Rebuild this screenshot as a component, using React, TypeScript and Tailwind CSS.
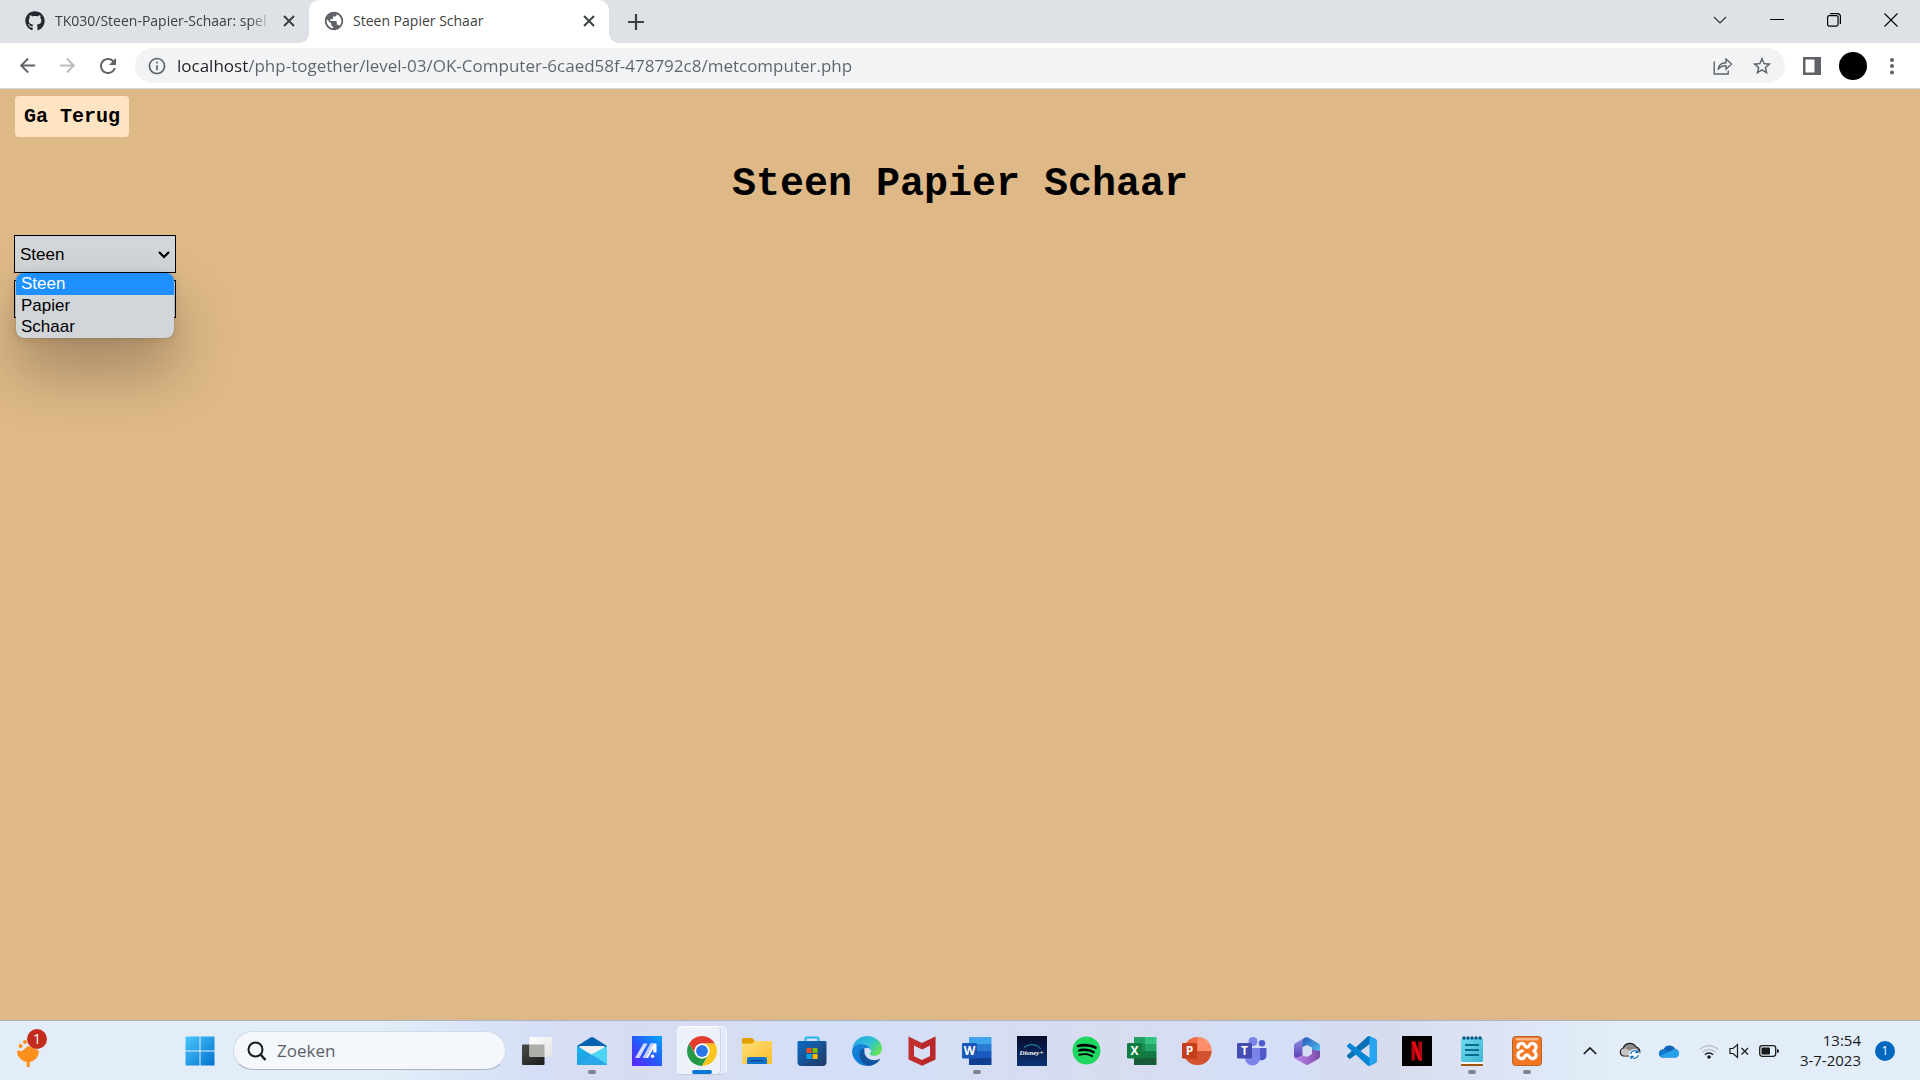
import React from "react";
import { FaGithub, FaSpotify } from "react-icons/fa";
import { MdArrowBack, MdArrowForward, MdRefresh, MdStarBorder, MdInfoOutline, MdPublic } from "react-icons/md";

function CloseGlyph() {
  return (
    <svg viewBox="0 0 12 12" className="size-3" fill="none" stroke="#3c4043" strokeWidth="2" aria-hidden="true">
      <path d="M1 1 11 11M11 1 1 11" />
    </svg>
  );
}

function Tab({ title, active, children }: { title: string; active?: boolean; children: React.ReactNode }) {
  return (
    <div
      role="tab"
      aria-selected={!!active}
      className={
        active
          ? "relative flex h-full w-[300px] items-center gap-2 rounded-t-[10px] bg-white pr-3 pb-0.5 pl-3.5"
          : "flex h-full w-[309px] items-center gap-2.5 pr-3 pb-0.5 pl-[25px]"
      }
    >
      {children}
      <span
        className={
          active
            ? "flex-1 overflow-hidden text-sm whitespace-nowrap text-[#3c4043]"
            : "flex-1 overflow-hidden mask-r-from-90% text-sm whitespace-nowrap text-[#3c4043]"
        }
      >
        {title}
      </span>
      <button type="button" aria-label={"Sluiten: " + title} className="flex size-4 items-center justify-center">
        <CloseGlyph />
      </button>
      {active && (
        <>
          <span className="absolute bottom-0 -left-2.5 size-2.5 bg-[radial-gradient(circle_at_0_0,transparent_10px,#fff_10px)]" />
          <span className="absolute -right-2.5 bottom-0 size-2.5 bg-[radial-gradient(circle_at_100%_0,transparent_10px,#fff_10px)]" />
        </>
      )}
    </div>
  );
}

function TabStrip() {
  return (
    <div className="flex h-[43px] items-center bg-[#dee1e6]">
      <div role="tablist" className="flex h-full">
        <Tab title="TK030/Steen-Papier-Schaar: spel">
          <FaGithub className="size-5 shrink-0 text-[#24292f]" />
        </Tab>
        <Tab title="Steen Papier Schaar" active>
          <MdPublic className="size-[22px] shrink-0 text-[#5f6368]" />
        </Tab>
      </div>
      <button type="button" aria-label="Nieuw tabblad" className="ml-[13px] flex size-7 items-center justify-center">
        <svg viewBox="0 0 16 16" className="size-4" stroke="#3c4043" strokeWidth="2.2" aria-hidden="true">
          <path d="M8 0v16M0 8h16" />
        </svg>
      </button>
      <div className="mr-px mb-1 ml-auto flex h-[38px]">
        <button type="button" aria-label="Tabbladen zoeken" className="flex w-[57px] items-center justify-center">
          <svg viewBox="0 0 14 14" className="size-3.5" fill="none" stroke="#333" strokeWidth="1.2" aria-hidden="true">
            <path d="M1 4l6 6 6-6" />
          </svg>
        </button>
        <button type="button" aria-label="Minimaliseren" className="flex w-[57px] items-center justify-center">
          <svg viewBox="0 0 14 14" className="size-3.5" stroke="#000" aria-hidden="true">
            <path d="M0 6.5h14" />
          </svg>
        </button>
        <button type="button" aria-label="Verkleinen" className="flex w-[57px] items-center justify-center">
          <svg viewBox="0 0 14 14" className="size-3.5" fill="none" stroke="#000" strokeWidth="1.2" aria-hidden="true">
            <rect x=".6" y="2.6" width="10.5" height="10.5" rx="1.8" />
            <path d="M3 .6h7.5a2.9 2.9 0 0 1 2.900 2.900V11" />
          </svg>
        </button>
        <button type="button" aria-label="Sluiten" className="flex w-[57px] items-center justify-center">
          <svg viewBox="0 0 14 14" className="size-3.5" fill="none" stroke="#000" strokeWidth="1.1" aria-hidden="true">
            <path d="M.5.5l13 13M13.5.5l-13 13" />
          </svg>
        </button>
      </div>
    </div>
  );
}

function Toolbar() {
  return (
    <div className="flex h-[46px] items-center border-b border-[#d5d8dc] bg-white pr-6 pl-4">
      <div className="flex items-center gap-[17px]">
        <button type="button" aria-label="Vorige">
          <MdArrowBack className="size-[23px] text-[#5f6368]" />
        </button>
        <button type="button" aria-label="Volgende">
          <MdArrowForward className="size-[23px] text-[#babcbe]" />
        </button>
        <button type="button" aria-label="Vernieuwen">
          <MdRefresh className="size-6 text-[#5f6368]" />
        </button>
      </div>
      <div className="ml-[15px] flex h-[35px] flex-1 items-center rounded-full bg-[#f1f3f4] pr-3 pl-3">
        <MdInfoOutline className="size-5 text-[#5f6368]" />
        <input
          aria-label="Adresbalk"
          defaultValue="localhost/php-together/level-03/OK-Computer-6caed58f-478792c8/metcomputer.php"
          className="ml-2.5 min-w-0 flex-1 bg-[linear-gradient(90deg,#202124_71px,#5f6368_71px)] bg-clip-text text-[17px] text-transparent caret-black outline-none"
        />
        <button type="button" aria-label="Delen" className="mr-[18px]">
          <svg viewBox="0 0 20 20" className="size-5" fill="none" stroke="#5f6368" strokeWidth="1.4" aria-hidden="true">
            <path d="M1.2 5.5V18h14v-3.5" />
            <path d="M5 13.5c.6-4.5 3.500-6.700 8-6.800V3l5.500 5-5.500 5.200V9.700c-3.600 0-6 .9-8 3.800Z" />
          </svg>
        </button>
        <button type="button" aria-label="Bladwijzer toevoegen">
          <MdStarBorder className="size-[22px] text-[#5f6368]" />
        </button>
      </div>
      <button type="button" aria-label="Zijvenster" className="ml-[18px]">
        <svg viewBox="0 0 18 18" className="size-[18px]" aria-hidden="true">
          <path fill="#5f6368" fillRule="evenodd" d="M0 0h18v18H0ZM2.5 2.500v13H11.500v-13Z" />
        </svg>
      </button>
      <button type="button" aria-label="Profiel" className="ml-[18px] size-7 rounded-full bg-black" />
      <button type="button" aria-label="Menu" className="ml-[21px]">
        <svg viewBox="0 0 8 18" className="h-[18px] w-2" fill="#5f6368" aria-hidden="true">
          <circle cx="4" cy="3" r="2" />
          <circle cx="4" cy="9" r="2" />
          <circle cx="4" cy="15.5" r="2" />
        </svg>
      </button>
    </div>
  );
}

const choices = ["Steen", "Papier", "Schaar"];

function GamePage() {
  return (
    <main className="flex-1 bg-[#deb887] px-3.5 pt-[7px]">
      <a
        href="#terug"
        className="ml-px inline-flex h-[41px] items-center rounded-[4px] bg-[#ffe4c4] px-[9px] font-['Courier_New','Liberation_Mono',monospace] text-xl font-bold text-black"
      >
        Ga Terug
      </a>
      <h1 className="mt-5 text-center font-['Courier_New','Liberation_Mono',monospace] text-[40px] leading-[56px] font-bold text-black">
        Steen Papier Schaar
      </h1>
      <form className="mt-[22px] flex w-[162px] flex-col gap-[7px] font-['Liberation_Sans',sans-serif] text-[17px] text-black">
        <div className="relative">
          <select
            aria-label="Keuze"
            defaultValue="Steen"
            className="block h-[38px] w-full appearance-none border border-black bg-[#d3d6d9] px-[5px] pt-0.5"
          >
            {choices.map((c) => (
              <option key={c}>{c}</option>
            ))}
          </select>
          <svg viewBox="0 0 12 8" className="absolute top-4 right-1.5 h-2 w-3" fill="none" stroke="#000" strokeWidth="2.2" aria-hidden="true">
            <path d="M1 1l5 5 5-5" />
          </svg>
          <ul
            role="listbox"
            aria-label="Opties"
            className="absolute top-full right-0.5 left-0.5 z-10 overflow-hidden rounded-lg bg-[#d3d6d9] pb-px leading-[21px] shadow-[0_0_1px_rgba(0,0,0,0.5),0_2px_12px_rgba(0,0,0,0.12),0_32px_60px_rgba(0,0,0,0.28)]"
          >
            {choices.map((c, i) => (
              <li
                key={c}
                role="option"
                aria-selected={i === 0}
                className={i === 0 ? "h-[22px] bg-[#1e90ff] px-[5px] text-white" : "h-[21px] px-[5px]"}
              >
                {c}
              </li>
            ))}
          </ul>
        </div>
        <button type="submit" aria-label="Versturen" className="h-[38px] w-full border border-black bg-[#d3d6d9]" />
      </form>
    </main>
  );
}

function WindowsIcon() {
  return (
    <svg viewBox="0 0 30 30" className="size-[30px]" aria-hidden="true">
      <defs>
        <linearGradient id="win" x1="0" y1="0" x2="1" y2="1" gradientUnits="objectBoundingBox">
          <stop offset="0" stopColor="#4cc9fb" />
          <stop offset="1" stopColor="#0070d0" />
        </linearGradient>
        <mask id="winMask">
          <path fill="#fff" d="M.5.5h14v14H.5ZM15.5.5h14v14h-14ZM.5 15.500h14v14H.5ZM15.500 15.500h14v14h-14Z" />
        </mask>
      </defs>
      <rect width="30" height="30" rx="1.5" fill="url(#win)" mask="url(#winMask)" />
    </svg>
  );
}

function TaskViewIcon() {
  return (
    <svg viewBox="0 0 30 30" className="size-[30px]" aria-hidden="true">
      <defs>
        <linearGradient id="tvd" x1="0" y1="0" x2="1" y2="1">
          <stop offset="0" stopColor="#4a4a4a" />
          <stop offset="1" stopColor="#1a1a1a" />
        </linearGradient>
        <linearGradient id="tvl" x1="0" y1="0" x2="1" y2="1">
          <stop offset="0" stopColor="#fff" />
          <stop offset="1" stopColor="#e2e2e4" />
        </linearGradient>
      </defs>
      <rect x="0" y="8.5" width="22.5" height="20.5" rx="1" fill="url(#tvd)" />
      <rect x="7.5" y="1" width="22.5" height="20" rx="1" fill="url(#tvl)" />
      <path d="M7.5 8.500h14a1 1 0 0 1 1 1V21h-14a1 1 0 0 1-1-1Z" fill="#adadaa" />
    </svg>
  );
}

function MailIcon() {
  return (
    <svg viewBox="0 0 30 30" className="size-[30px]" aria-hidden="true">
      <defs>
        <linearGradient id="ml" x1="0" y1="0" x2="1" y2="1">
          <stop offset="0" stopColor="#1db4ee" />
          <stop offset="1" stopColor="#1c92dc" />
        </linearGradient>
      </defs>
      <path d="M0 10 13.5 1.500a3 3 0 0 1 3 0L30 10l-4 5H4Z" fill="#0560ad" />
      <path d="M2.5 10h25v8L15 24 2.500 18Z" fill="#f1f1f1" />
      <path d="M0 10l15 9L30 28a1 1 0 0 1-1 1H1a1 1 0 0 1-1-1Z" fill="url(#ml)" />
      <path d="M30 10v18.500L14.500 18.500Z" fill="#4bd5f4" />
      <path d="M0 28.500 14.500 18.500 30 28.500l-1 .5H1Z" fill="#2aa7e8" />
    </svg>
  );
}

function MyAsusIcon() {
  return (
    <svg viewBox="0 0 30 30" className="size-[30px]" aria-hidden="true">
      <defs>
        <linearGradient id="asus" x1="0" y1="1" x2="1" y2="0">
          <stop offset="0" stopColor="#5a22fb" />
          <stop offset=".45" stopColor="#2a55fb" />
          <stop offset="1" stopColor="#00a5ff" />
        </linearGradient>
      </defs>
      <rect width="30" height="30" fill="url(#asus)" />
      <path d="M11.500 7.500h4L7.500 22h-4.500Z" fill="#d3dcff" />
      <path d="M18.500 7.500h6V16.500h-3.200v-4L16 22h-4.500Z" fill="#fff" />
      <path d="M18.500 7.500h3.500L14 22h-3.500Z" fill="#c0ccff" />
      <circle cx="20.5" cy="20.3" r="1.7" fill="#fff" />
    </svg>
  );
}

function ChromeIcon() {
  return (
    <svg viewBox="0 0 48 48" className="size-[30px]" aria-hidden="true">
      <path d="M3.220 12A24 24 0 0 1 44.780 12L24 12A12 12 0 0 0 13.610 30Z" fill="#e33b2e" />
      <path d="M24 48A24 24 0 0 1 3.220 12L13.610 30A12 12 0 0 0 34.390 30Z" fill="#249a47" />
      <path d="M44.780 12A24 24 0 0 1 24 48L34.390 30A12 12 0 0 0 24 12Z" fill="#fcc61c" />
      <circle cx="24" cy="24" r="12" fill="#fff" />
      <circle cx="24" cy="24" r="9.5" fill="#2a78e8" />
    </svg>
  );
}

function FolderIcon() {
  return (
    <svg viewBox="0 0 30 30" className="size-[30px]" aria-hidden="true">
      <defs>
        <linearGradient id="fold" x1="0" y1="0" x2="1" y2="1">
          <stop offset="0" stopColor="#ffe07a" />
          <stop offset="1" stopColor="#fbbd2c" />
        </linearGradient>
      </defs>
      <path d="M0 3.500A1.500 1.500 0 0 1 1.500 2H10l3 3h15.500A1.500 1.500 0 0 1 30 6.500V10H0Z" fill="#e0a000" />
      <path d="M0 7.500h10L13 5h16a1 1 0 0 1 1 1v21a1 1 0 0 1-1 1H1a1 1 0 0 1-1-1Z" fill="url(#fold)" />
      <path d="M5 28v-5a2 2 0 0 1 2-2h16a2 2 0 0 1 2 2v5Z" fill="#0f74cb" />
      <path d="M8.500 24.700h13" stroke="#0a4a8c" strokeWidth="1.3" />
    </svg>
  );
}

function StoreIcon() {
  return (
    <svg viewBox="0 0 30 30" className="size-[30px]" aria-hidden="true">
      <defs>
        <linearGradient id="store" x1="0" y1="0" x2="1" y2="1">
          <stop offset="0" stopColor="#0a6cc4" />
          <stop offset="1" stopColor="#233862" />
        </linearGradient>
      </defs>
      <path d="M8.500 6V2.500a1 1 0 0 1 1-1h11a1 1 0 0 1 1 1V6" fill="none" stroke="#23b4f0" strokeWidth="2" />
      <path d="M.5 6A1 1 0 0 1 1.500 5h27a1 1 0 0 1 1 1v20a4 4 0 0 1-4 4h-21a4 4 0 0 1-4-4Z" fill="url(#store)" />
      <path fill="#f25022" d="M9.500 12h5v5h-5Z" />
      <path fill="#7fba00" d="M15.500 12h5v5h-5Z" />
      <path fill="#00a4ef" d="M9.500 18h5v5h-5Z" />
      <path fill="#ffb900" d="M15.500 18h5v5h-5Z" />
    </svg>
  );
}

function EdgeIcon() {
  return (
    <svg viewBox="0 0 30 30" className="size-[30px]" aria-hidden="true">
      <defs>
        <linearGradient id="e1" x1="0" y1=".2" x2="1" y2=".7">
          <stop offset="0" stopColor="#2aa5e6" />
          <stop offset=".55" stopColor="#2cc3d2" />
          <stop offset="1" stopColor="#6be44b" />
        </linearGradient>
        <linearGradient id="e2" x1="0" y1="0" x2=".3" y2="1">
          <stop offset="0" stopColor="#1583d2" />
          <stop offset="1" stopColor="#0b7bdc" />
        </linearGradient>
      </defs>
      <path d="M.4 13C1.300 5.500 7.300 0 15 0c8.300 0 15 5.700 15 12.500 0 4.300-3.400 7.300-7.500 7.300-3.300 0-4.700-1-4.700-1.900 0-.8 1.200-1.200 1.200-3.100C19 10.700 14.800 8 10 8 5.500 8 2 10.200.4 13Z" fill="url(#e1)" />
      <path d="M0 15C.5 10.500 4.500 8 9.500 8c5.500 0 9.300 3.200 9.500 6.500-.8-1.600-2.200-2.700-4-2.700-3.300 0-5.500 3-5.500 6.700 0 5 3.700 10 10.500 10.500A15 15 0 0 1 0 15Z" fill="url(#e2)" />
      <path d="M11.800 12.600C9 13 7.500 16 7.500 19c0 5.500 4 11 10.500 10.700 4.500-.5 8-3 10-6.200.3-.5-.1-.8-.6-.5a11 11 0 0 1-5.200 1.200c-5 0-8.700-3.200-9.600-6.700-.5-2 .5-4-.8-4.900Z" fill="#10549e" />
    </svg>
  );
}

function McAfeeIcon() {
  return (
    <svg viewBox="0 0 30 30" className="size-[30px]" aria-hidden="true">
      <path d="M1.500.5 15 7 28.500.5V23.500L15 29.800 1.500 23.500Z" fill="#c02f30" />
      <path d="M7 9.500l8 4 8-4v10.700L15 24l-8-3.800Z" fill="#d9dff3" />
      <path d="M15 7 28.500.5V23.500L15 29.800V24l8-3.800V9.500l-8 4Z" fill="#a61c22" opacity=".3" />
    </svg>
  );
}

function OfficeBadge({ letter, color }: { letter: string; color: string }) {
  return (
    <>
      <rect x="0" y="7" width="15" height="15.5" rx="1.2" fill={color} />
      <text x="7.5" y="19" textAnchor="middle" fontFamily="Open Sans, sans-serif" fontWeight="700" fontSize="12" fill="#fff">
        {letter}
      </text>
    </>
  );
}

function SheetIcon({ letter, badge, rows }: { letter: string; badge: string; rows: string[] }) {
  return (
    <svg viewBox="0 0 30 30" className="size-[30px]" aria-hidden="true">
      {rows.map((c, i) => (
        <rect key={c} x="7" y={1 + i * 7} width="22.5" height="7" fill={c} />
      ))}
      {letter === "X" && <path d="M7 1h11v21H7Z" fill="#11703c" opacity=".45" />}
      <OfficeBadge letter={letter} color={badge} />
    </svg>
  );
}

function DisneyIcon() {
  return (
    <svg viewBox="0 0 30 30" className="size-[30px]" aria-hidden="true">
      <defs>
        <linearGradient id="dis" x1="0" y1="0" x2="0" y2="1">
          <stop offset="0" stopColor="#060a2a" />
          <stop offset="1" stopColor="#0a3474" />
        </linearGradient>
      </defs>
      <rect width="30" height="30" fill="url(#dis)" />
      <path d="M7 11.500C12 7.500 20 7.500 23.500 13" fill="none" stroke="#2fa7c9" strokeWidth=".9" />
      <text x="14.5" y="18.800" textAnchor="middle" fontFamily="Liberation Serif, serif" fontStyle="italic" fontWeight="700" fontSize="7" fill="#fff">
        Disney+
      </text>
    </svg>
  );
}

function PowerPointIcon() {
  return (
    <svg viewBox="0 0 30 30" className="size-[30px]" aria-hidden="true">
      <circle cx="15.5" cy="15" r="14" fill="#ed6c47" />
      <path d="M15.500 1a14 14 0 0 1 14 14h-14Z" fill="#ff8f6b" />
      <path d="M1.500 15h28a14 14 0 0 1-28 0Z" fill="#d35230" />
      <OfficeBadge letter="P" color="#c43e1c" />
    </svg>
  );
}

function TeamsIcon() {
  return (
    <svg viewBox="0 0 30 30" className="size-[30px]" aria-hidden="true">
      <circle cx="25" cy="7.3" r="3.2" fill="#5059c9" />
      <path d="M20 12h8.500a1 1 0 0 1 1 1v6.500a5 5 0 0 1-9.500 2Z" fill="#5059c9" />
      <circle cx="16" cy="5.5" r="4.5" fill="#7b83eb" />
      <path d="M8.500 12H22a1 1 0 0 1 1 1v9a7.500 7.500 0 0 1-15 0V12.500Z" fill="#7b83eb" />
      <OfficeBadge letter="T" color="#444cb3" />
    </svg>
  );
}

function M365Icon() {
  return (
    <svg viewBox="0 0 30 30" className="size-[30px]" aria-hidden="true">
      <defs>
        <linearGradient id="m1" x1="0" y1="0" x2="0" y2="1">
          <stop offset="0" stopColor="#8d8fe6" />
          <stop offset="1" stopColor="#5a3fb0" />
        </linearGradient>
        <linearGradient id="m2" x1="0" y1="0" x2="1" y2="1">
          <stop offset="0" stopColor="#2456b4" />
          <stop offset="1" stopColor="#55cdf8" />
        </linearGradient>
        <linearGradient id="m3" x1="0" y1="0" x2="1" y2="0">
          <stop offset="0" stopColor="#c48af0" />
          <stop offset="1" stopColor="#7a4ba8" />
        </linearGradient>
      </defs>
      <path d="M12.500 1.800 3.700 7A3 3 0 0 0 2 9.700v10.600A3 3 0 0 0 3.700 23l6.800-3.800V11l7-4.500Z" fill="url(#m1)" />
      <path d="M12.500 1.800a4 4 0 0 1 4 0L26.200 7.200A3 3 0 0 1 28 10v9l-8-3.500v-4l-5-2.500-4.500 2C10 6 11 3.500 12.500 1.800Z" fill="url(#m2)" />
      <path d="M28 15v5.300a3 3 0 0 1-1.700 2.700L17 28.300a4 4 0 0 1-4 0L3.700 23A3 3 0 0 1 2 20.300c3.500 2.500 6 .6 8.500-1.100l4.500 1.800 5-3v-4.500Z" fill="url(#m3)" />
    </svg>
  );
}

function VsCodeIcon() {
  return (
    <svg viewBox="0 0 100 100" className="size-[30px]" aria-hidden="true">
      <path fill="#0870b5" d="M96.460 10.800 75.860.87C73.470-.28 70.620.2 68.750 2.080L1.300 63.580c-1.810 1.650-1.810 4.500.01 6.150l5.500 5c1.490 1.350 3.720 1.450 5.320.24L93.360 13.370c2.730-2.070 6.640-.12 6.640 3.300v-.24c0-2.400-1.380-4.590-3.540-5.630Z" />
      <path fill="#0a86d4" d="M96.460 89.200 75.860 99.130c-2.390 1.150-5.240.66-7.110-1.210L1.300 36.420c-1.810-1.650-1.810-4.500.01-6.150l5.500-5c1.490-1.350 3.720-1.450 5.320-.24l81.230 61.600c2.730 2.070 6.640.12 6.640-3.300v.24c0 2.400-1.380 4.590-3.540 5.630Z" />
      <path fill="#27a4f2" d="M75.860 99.130c-2.390 1.150-5.240.66-7.110-1.210 2.310 2.310 6.250.67 6.250-2.590V4.670c0-3.260-3.940-4.890-6.250-2.590 1.870-1.870 4.720-2.360 7.110-1.210l20.600 9.910c2.160 1.040 3.540 3.230 3.540 5.630v67.170c0 2.400-1.380 4.590-3.540 5.630Z" />
    </svg>
  );
}

function NetflixIcon() {
  return (
    <svg viewBox="0 0 30 30" className="size-[30px]" aria-hidden="true">
      <rect width="30" height="30" fill="#000" />
      <path d="M9.500 5.500h3.700v18.800l-3.700.4ZM16.300 5.500H20v19.200l-3.700-.4Z" fill="#b1060f" />
      <path d="M9.500 5.500h3.700L20 24.700l-3.700-.4Z" fill="#e50914" />
    </svg>
  );
}

function NotepadIcon() {
  return (
    <svg viewBox="0 0 30 30" className="size-[30px]" aria-hidden="true">
      <defs>
        <linearGradient id="note" x1="0" y1="0" x2="1" y2="1">
          <stop offset="0" stopColor="#70dcee" />
          <stop offset="1" stopColor="#3fb4d4" />
        </linearGradient>
      </defs>
      <rect x="4" y="26" width="22" height="4" rx="1" fill="#a2540c" />
      <rect x="4" y="25" width="22" height="3" fill="#f6f6f6" />
      <rect x="4" y="2" width="22" height="24" rx="1" fill="url(#note)" />
      <g fill="#0b5a80">
        <circle cx="7" cy="2" r="1.7" />
        <circle cx="11" cy="2" r="1.7" />
        <circle cx="15" cy="2" r="1.7" />
        <circle cx="19" cy="2" r="1.7" />
        <circle cx="23" cy="2" r="1.7" />
      </g>
      <path d="M8 9h14M8 14h14M8 19h14" stroke="#0b6a90" strokeWidth="1.8" />
    </svg>
  );
}

function XamppIcon() {
  return (
    <svg viewBox="0 0 30 30" className="size-[30px]" aria-hidden="true">
      <rect x=".5" y=".5" width="29" height="29" rx="3" fill="#f37623" stroke="#b5632a" />
      <path d="M3 2h24l-1.500 2.500h-21Z" fill="#f9b88a" />
      <path
        d="M6 11.500a3.600 3.600 0 0 1 6.800-2c.7 1.300 1.200 1.700 2.200 1.700s1.500-.4 2.200-1.700a3.600 3.600 0 0 1 6.800 2c0 1.700-.8 2.600-2.200 3.500 1.400.9 2.200 1.800 2.200 3.500a3.600 3.600 0 0 1-6.800 2c-.7-1.300-1.200-1.700-2.200-1.700s-1.500.4-2.200 1.700a3.600 3.600 0 0 1-6.800-2c0-1.700.8-2.600 4.200-3.500"
        fill="none"
        stroke="#fff"
        strokeWidth="3.2"
        strokeLinecap="round"
        strokeLinejoin="round"
      />
    </svg>
  );
}

type App = { name: string; icon: React.ReactNode; state?: "open" | "active" };

const apps: App[] = [
  { name: "Taakweergave", icon: <TaskViewIcon /> },
  { name: "Mail", icon: <MailIcon />, state: "open" },
  { name: "MyASUS", icon: <MyAsusIcon /> },
  { name: "Google Chrome", icon: <ChromeIcon />, state: "active" },
  { name: "Verkenner", icon: <FolderIcon /> },
  { name: "Microsoft Store", icon: <StoreIcon /> },
  { name: "Microsoft Edge", icon: <EdgeIcon /> },
  { name: "McAfee", icon: <McAfeeIcon /> },
  { name: "Word", icon: <SheetIcon letter="W" badge="#1a56b8" rows={["#41a5ee", "#2b7cd3", "#185abd", "#103f91"]} />, state: "open" },
  { name: "Disney+", icon: <DisneyIcon /> },
  { name: "Spotify", icon: <FaSpotify className="size-[29px] rounded-full bg-[radial-gradient(circle,#000_55%,transparent_56%)] text-[#1ed760]" /> },
  { name: "Excel", icon: <SheetIcon letter="X" badge="#107c41" rows={["#33c481", "#21a366", "#107c41", "#185c37"]} /> },
  { name: "PowerPoint", icon: <PowerPointIcon /> },
  { name: "Teams", icon: <TeamsIcon /> },
  { name: "Microsoft 365", icon: <M365Icon /> },
  { name: "Visual Studio Code", icon: <VsCodeIcon /> },
  { name: "Netflix", icon: <NetflixIcon /> },
  { name: "Kladblok", icon: <NotepadIcon />, state: "open" },
  { name: "XAMPP", icon: <XamppIcon />, state: "open" },
];

function AppButton({ app }: { app: App }) {
  return (
    <button type="button" aria-label={app.name} className="relative flex h-full w-[55px] items-center justify-center">
      {app.state === "active" && (
        <>
          <span className="absolute top-[5px] right-0.5 h-[49px] w-10 rounded-[5px] border border-white/60 border-b-[#c4cbe0] bg-[#e4eaf8]" />
          <span className="absolute top-[5px] left-[3px] h-[49px] w-[44px] rounded-[5px] border border-white/70 border-r-[#cdd5ea] border-b-[#c4cbe0] bg-[#edf1fa]" />
          <span className="absolute bottom-[6px] left-[18px] h-1 w-5 rounded-full bg-[#0078d4]" />
        </>
      )}
      {app.state === "open" && <span className="absolute bottom-[6px] left-6 h-1 w-2 rounded-full bg-[#7f838c]" />}
      <span className="relative">{app.icon}</span>
    </button>
  );
}

function Tray() {
  return (
    <div className="ml-auto flex h-full items-center pr-[25px] text-[#1b1b1b]">
      <button type="button" aria-label="Verborgen pictogrammen">
        <svg viewBox="0 0 14 14" className="size-3.5" fill="none" stroke="#1b1b1b" strokeWidth="1.7" aria-hidden="true">
          <path d="M.8 10 7 4l6.200 6" />
        </svg>
      </button>
      <button type="button" aria-label="Synchronisatie" className="ml-[22px]">
        <svg viewBox="0 0 22 18" className="h-[18px] w-[22px]" aria-hidden="true">
          <path d="M5 14a4 4 0 0 1-.8-7.800A7 7 0 0 1 17 5a4.600 4.600 0 0 1 1.500 8.500L17 14Z" fill="#8b8b8b" stroke="#1b1b1b" strokeWidth="1.2" />
          <path d="M5 13.400a3.400 3.400 0 0 1-.8-6.600c2-.6 4 0 5.300 1.500L16 11v2.400Z" fill="#c6c6c6" />
          <circle cx="15.5" cy="12.5" r="5.5" fill="#fff" />
          <path d="M11.800 12a3.800 3.800 0 0 1 7-1.500M19.200 13a3.800 3.800 0 0 1-7 1.500M19 8v2.700h-2.700M12 17v-2.700h2.700" fill="none" stroke="#0f6cbd" strokeWidth="1.2" />
        </svg>
      </button>
      <button type="button" aria-label="OneDrive" className="ml-[18px]">
        <svg viewBox="0 0 20 14" className="h-3.5 w-5" aria-hidden="true">
          <path d="M4 13.500a4 4 0 0 1 .5-8A6.500 6.500 0 0 1 16.300 5 4.300 4.300 0 0 1 16 13.500Z" fill="#0d62b8" />
          <path d="M0 9.500a4 4 0 0 1 4.500-4c1-.1 2 .2 3 .8L15 11l-11 2.500a4 4 0 0 1-4-4Z" fill="#1379d1" />
          <path d="M1 12 12 6.800a5 5 0 0 1 4.300-1.800A4.300 4.300 0 0 1 16 13.500H4A4 4 0 0 1 1 12Z" fill="#28a0ea" />
        </svg>
      </button>
      <button type="button" aria-label="Netwerk, geluid en batterij" className="ml-5 flex items-center gap-2.5">
        <svg viewBox="0 0 20 16" className="h-4 w-5" fill="none" strokeWidth="1.5" aria-hidden="true">
          <path d="M.8 6.500a13 13 0 0 1 18.400 0M3.500 9.300a9.200 9.200 0 0 1 13 0" stroke="#bcc4cd" />
          <path d="M6 11.800a5.600 5.600 0 0 1 8 0" stroke="#1b1b1b" />
          <circle cx="10" cy="14" r="1.8" fill="#1b1b1b" />
        </svg>
        <svg viewBox="0 0 20 16" className="h-4 w-5" fill="none" stroke="#1b1b1b" strokeWidth="1.2" aria-hidden="true">
          <path d="M1 5.500h3L8.500 1.500v13L4 10.500H1Z" />
          <path d="M12.500 5l6.500 6.500M19 5l-6.500 6.500" />
        </svg>
        <svg viewBox="0 0 20 16" className="h-4 w-5" aria-hidden="true">
          <rect x=".7" y="2.7" width="16" height="10.6" rx="2.5" fill="none" stroke="#1b1b1b" strokeWidth="1.3" />
          <rect x="2.5" y="4.5" width="8.5" height="7" rx="1" fill="#1b1b1b" />
          <path d="M18 6v4a2 2 0 0 0 2-2 2 2 0 0 0-2-2Z" fill="#1b1b1b" />
        </svg>
      </button>
      <button type="button" className="ml-[21px] pb-0.5 text-right text-[15px] leading-5">
        <span className="block">13:54</span>
        <span className="block">3-7-2023</span>
      </button>
      <button
        type="button"
        aria-label="1 melding"
        className="ml-3.5 flex size-5 items-center justify-center rounded-full bg-[#0067c0] text-xs text-white"
      >
        1
      </button>
    </div>
  );
}

function Taskbar() {
  return (
    <footer className="flex h-[60px] items-center border-t border-[#a9b4cc] bg-[linear-gradient(90deg,#e2edf8_0%,#e2edf8_20%,#d5def6_28%,#d8dcf0_33%,#d3dff8_44%,#d8dcef_58%,#d4dff8_66%,#d7dbee_72%,#e2edf9_84%,#e2edf9_100%)]">
      <button type="button" aria-label="Widgets" className="relative ml-4 h-[38px] w-8">
        <svg viewBox="0 0 22 30" className="mt-1 ml-px h-[30px] w-[22px]" fill="#fd8f1d" aria-hidden="true">
          <path d="M0 13c1.500-1 3.500-.5 4.500.5L11 8l6 2 5 3a11 11 0 0 1-9.300 11v5h-3v-5A11 11 0 0 1 0 13Z" />
          <circle cx="3.5" cy="8" r="2" />
          <circle cx="8" cy="4" r="2" />
        </svg>
        <span className="absolute -top-[3px] right-px flex size-5 items-center justify-center rounded-full bg-[#c42b1c] text-sm leading-none text-white">
          1
        </span>
      </button>
      <button type="button" aria-label="Start" className="ml-[137px] shrink-0">
        <WindowsIcon />
      </button>
      <label className="ml-[18px] flex h-[39px] w-[273px] items-center rounded-full border border-[#d0dbe9] border-b-[#a9b1c2] bg-[#f4f8fd] pl-[13px]">
        <svg viewBox="0 0 20 20" className="size-5" fill="none" stroke="#1b1b1b" strokeWidth="2" aria-hidden="true">
          <circle cx="8.5" cy="8.5" r="7" />
          <path d="M13.500 13.500 18.500 19" strokeWidth="2.5" />
        </svg>
        <input
          type="search"
          aria-label="Zoeken"
          placeholder="Zoeken"
          className="ml-2.5 min-w-0 flex-1 bg-transparent text-[17px] outline-none placeholder:text-[#5d6066]"
        />
      </label>
      <nav className="ml-[3px] flex h-full">
        {apps.map((app) => (
          <AppButton key={app.name} app={app} />
        ))}
      </nav>
      <Tray />
    </footer>
  );
}

export default function App() {
  return (
    <div className="flex h-screen flex-col overflow-hidden font-['Open_Sans','Noto_Sans',sans-serif]">
      <header>
        <TabStrip />
        <Toolbar />
      </header>
      <GamePage />
      <Taskbar />
    </div>
  );
}
